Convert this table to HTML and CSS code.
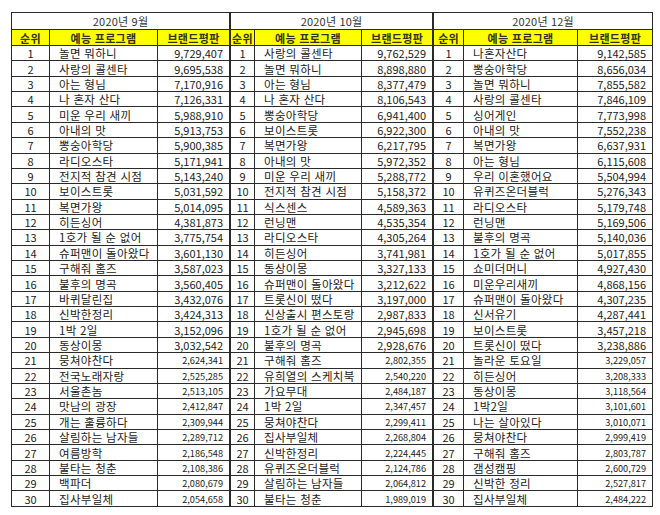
FILE: index.html
```html
<!DOCTYPE html>
<html lang="ko">
<head>
<meta charset="utf-8">
<title>예능 프로그램 브랜드평판</title>
<link rel="stylesheet" href="styles.css">
</head>
<body>
<div class="wrap">
<table class="t1">
<colgroup><col class="c-rank"><col class="c-name"><col class="c-val"></colgroup>
<tr class="title"><td colspan="3">2020년 9월</td></tr>
<tr class="head"><th>순위</th><th>예능 프로그램</th><th>브랜드평판</th></tr>
<tr><td>1</td><td>놀면 뭐하니</td><td>9,729,407</td></tr>
<tr><td>2</td><td>사랑의 콜센타</td><td>9,695,538</td></tr>
<tr><td>3</td><td>아는 형님</td><td>7,170,916</td></tr>
<tr><td>4</td><td>나 혼자 산다</td><td>7,126,331</td></tr>
<tr><td>5</td><td>미운 우리 새끼</td><td>5,988,910</td></tr>
<tr><td>6</td><td>아내의 맛</td><td>5,913,753</td></tr>
<tr><td>7</td><td>뽕숭아학당</td><td>5,900,385</td></tr>
<tr><td>8</td><td>라디오스타</td><td>5,171,941</td></tr>
<tr><td>9</td><td>전지적 참견 시점</td><td>5,143,240</td></tr>
<tr><td>10</td><td>보이스트롯</td><td>5,031,592</td></tr>
<tr><td>11</td><td>복면가왕</td><td>5,014,095</td></tr>
<tr><td>12</td><td>히든싱어</td><td>4,381,873</td></tr>
<tr><td>13</td><td>1호가 될 순 없어</td><td>3,775,754</td></tr>
<tr><td>14</td><td>슈퍼맨이 돌아왔다</td><td>3,601,130</td></tr>
<tr><td>15</td><td>구해줘 홈즈</td><td>3,587,023</td></tr>
<tr><td>16</td><td>불후의 명곡</td><td>3,560,405</td></tr>
<tr><td>17</td><td>바퀴달린집</td><td>3,432,076</td></tr>
<tr><td>18</td><td>신박한정리</td><td>3,424,313</td></tr>
<tr><td>19</td><td>1박 2일</td><td>3,152,096</td></tr>
<tr><td>20</td><td>동상이몽</td><td>3,032,542</td></tr>
<tr class="sm"><td>21</td><td>뭉쳐야찬다</td><td>2,624,341</td></tr>
<tr class="sm"><td>22</td><td>전국노래자랑</td><td>2,525,285</td></tr>
<tr class="sm"><td>23</td><td>서울촌놈</td><td>2,513,105</td></tr>
<tr class="sm"><td>24</td><td>맛남의 광장</td><td>2,412,847</td></tr>
<tr class="sm"><td>25</td><td>개는 훌륭하다</td><td>2,309,944</td></tr>
<tr class="sm"><td>26</td><td>살림하는 남자들</td><td>2,289,712</td></tr>
<tr class="sm"><td>27</td><td>여름방학</td><td>2,186,548</td></tr>
<tr class="sm"><td>28</td><td>불타는 청춘</td><td>2,108,386</td></tr>
<tr class="sm"><td>29</td><td>백파더</td><td>2,080,679</td></tr>
<tr class="sm"><td>30</td><td>집사부일체</td><td>2,054,658</td></tr>
</table>
<table class="t2">
<colgroup><col class="c-rank"><col class="c-name"><col class="c-val"></colgroup>
<tr class="title"><td colspan="3">2020년 10월</td></tr>
<tr class="head"><th>순위</th><th>예능 프로그램</th><th>브랜드평판</th></tr>
<tr><td>1</td><td>사랑의 콜센타</td><td>9,762,529</td></tr>
<tr><td>2</td><td>놀면 뭐하니</td><td>8,898,880</td></tr>
<tr><td>3</td><td>아는 형님</td><td>8,377,479</td></tr>
<tr><td>4</td><td>나 혼자 산다</td><td>8,106,543</td></tr>
<tr><td>5</td><td>뽕숭아학당</td><td>6,941,400</td></tr>
<tr><td>6</td><td>보이스트롯</td><td>6,922,300</td></tr>
<tr><td>7</td><td>복면가왕</td><td>6,217,795</td></tr>
<tr><td>8</td><td>아내의 맛</td><td>5,972,352</td></tr>
<tr><td>9</td><td>미운 우리 새끼</td><td>5,288,772</td></tr>
<tr><td>10</td><td>전지적 참견 시점</td><td>5,158,372</td></tr>
<tr><td>11</td><td>식스센스</td><td>4,589,363</td></tr>
<tr><td>12</td><td>런닝맨</td><td>4,535,354</td></tr>
<tr><td>13</td><td>라디오스타</td><td>4,305,264</td></tr>
<tr><td>14</td><td>히든싱어</td><td>3,741,981</td></tr>
<tr><td>15</td><td>동상이몽</td><td>3,327,133</td></tr>
<tr><td>16</td><td>슈퍼맨이 돌아왔다</td><td>3,212,622</td></tr>
<tr><td>17</td><td>트롯신이 떴다</td><td>3,197,000</td></tr>
<tr><td>18</td><td>신상출시 편스토랑</td><td>2,987,833</td></tr>
<tr><td>19</td><td>1호가 될 순 없어</td><td>2,945,698</td></tr>
<tr><td>20</td><td>불후의 명곡</td><td>2,928,676</td></tr>
<tr class="sm"><td>21</td><td>구해줘 홈즈</td><td>2,802,355</td></tr>
<tr class="sm"><td>22</td><td>유희열의 스케치북</td><td>2,540,220</td></tr>
<tr class="sm"><td>23</td><td>가요무대</td><td>2,484,187</td></tr>
<tr class="sm"><td>24</td><td>1박 2일</td><td>2,347,457</td></tr>
<tr class="sm"><td>25</td><td>뭉쳐야찬다</td><td>2,299,411</td></tr>
<tr class="sm"><td>26</td><td>집사부일체</td><td>2,268,804</td></tr>
<tr class="sm"><td>27</td><td>신박한정리</td><td>2,224,445</td></tr>
<tr class="sm"><td>28</td><td>유퀴즈온더블럭</td><td>2,124,786</td></tr>
<tr class="sm"><td>29</td><td>살림하는 남자들</td><td>2,064,812</td></tr>
<tr class="sm"><td>30</td><td>불타는 청춘</td><td>1,989,019</td></tr>
</table>
<table class="t3">
<colgroup><col class="c-rank"><col class="c-name"><col class="c-val"></colgroup>
<tr class="title"><td colspan="3">2020년 12월</td></tr>
<tr class="head"><th>순위</th><th>예능 프로그램</th><th>브랜드평판</th></tr>
<tr><td>1</td><td>나혼자산다</td><td>9,142,585</td></tr>
<tr><td>2</td><td>뽕숭아학당</td><td>8,656,034</td></tr>
<tr><td>3</td><td>놀면 뭐하니</td><td>7,855,582</td></tr>
<tr><td>4</td><td>사랑의 콜센타</td><td>7,846,109</td></tr>
<tr><td>5</td><td>싱어게인</td><td>7,773,998</td></tr>
<tr><td>6</td><td>아내의 맛</td><td>7,552,238</td></tr>
<tr><td>7</td><td>복면가왕</td><td>6,637,931</td></tr>
<tr><td>8</td><td>아는 형님</td><td>6,115,608</td></tr>
<tr><td>9</td><td>우리 이혼했어요</td><td>5,504,994</td></tr>
<tr><td>10</td><td>유퀴즈온더블럭</td><td>5,276,343</td></tr>
<tr><td>11</td><td>라디오스타</td><td>5,179,748</td></tr>
<tr><td>12</td><td>런닝맨</td><td>5,169,506</td></tr>
<tr><td>13</td><td>불후의 명곡</td><td>5,140,036</td></tr>
<tr><td>14</td><td>1호가 될 순 없어</td><td>5,017,855</td></tr>
<tr><td>15</td><td>쇼미더머니</td><td>4,927,430</td></tr>
<tr><td>16</td><td>미운우리새끼</td><td>4,868,156</td></tr>
<tr><td>17</td><td>슈퍼맨이 돌아왔다</td><td>4,307,235</td></tr>
<tr><td>18</td><td>신서유기</td><td>4,287,441</td></tr>
<tr><td>19</td><td>보이스트롯</td><td>3,457,218</td></tr>
<tr><td>20</td><td>트롯신이 떴다</td><td>3,238,886</td></tr>
<tr class="sm"><td>21</td><td>놀라운 토요일</td><td>3,229,057</td></tr>
<tr class="sm"><td>22</td><td>히든싱어</td><td>3,208,333</td></tr>
<tr class="sm"><td>23</td><td>동상이몽</td><td>3,118,564</td></tr>
<tr class="sm"><td>24</td><td>1박2일</td><td>3,101,601</td></tr>
<tr class="sm"><td>25</td><td>나는 살아있다</td><td>3,010,071</td></tr>
<tr class="sm"><td>26</td><td>뭉쳐야찬다</td><td>2,999,419</td></tr>
<tr class="sm"><td>27</td><td>구해줘 홈즈</td><td>2,803,787</td></tr>
<tr class="sm"><td>28</td><td>갬성캠핑</td><td>2,600,729</td></tr>
<tr class="sm"><td>29</td><td>신박한 정리</td><td>2,527,817</td></tr>
<tr class="sm"><td>30</td><td>집사부일체</td><td>2,484,222</td></tr>
</table>
</div>
</body>
</html>
```
FILE: styles.css
```css
html, body {
  margin: 0;
  padding: 0;
  background: #ffffff;
}
body {
  font-family: "Noto Sans CJK KR", "Noto Sans", sans-serif;
  color: #222222;
}
.wrap {
  display: flex;
  align-items: flex-start;
  padding: 12px 0 0 11px;
}
table {
  border-collapse: collapse;
  table-layout: fixed;
  border: 1px solid #1e1e1e;
}
.t1 { width: 218px; }
.t2 { width: 202px; }
.t3 { width: 219px; }
.t1 .c-rank { width: 38px; }
.t1 .c-name { width: 108px; }
.t1 .c-val { width: 72px; }
.t2 .c-rank { width: 24px; }
.t2 .c-name { width: 107px; }
.t2 .c-val { width: 71px; }
.t3 .c-rank { width: 30px; }
.t3 .c-name { width: 114px; }
.t3 .c-val { width: 75px; }
td, th {
  border: 1px solid #2a2a2a;
  padding: 0;
  font-size: 11px;
  line-height: 12px;
  white-space: nowrap;
  overflow: hidden;
  font-weight: 400;
}
tr { height: 15.37px; }
tr.title { height: 17px; }
tr.head { height: 16px; }
.title td {
  text-align: center;
  color: #333333;
  letter-spacing: 0.2px;
}
.head th {
  background: #ffff00;
  color: #33331a;
  font-weight: 700;
  text-align: center;
  letter-spacing: 0.3px;
}
td:nth-child(1) { text-align: center; }
td:nth-child(2) {
  text-align: left;
  padding-left: 9px;
  font-size: 11.5px;
  letter-spacing: 0.3px;
}
td:nth-child(3) {
  text-align: right;
  padding-right: 6px;
}
.title td:nth-child(1) { text-align: center; }
.sm td:nth-child(3) { font-size: 9.2px; }
```
